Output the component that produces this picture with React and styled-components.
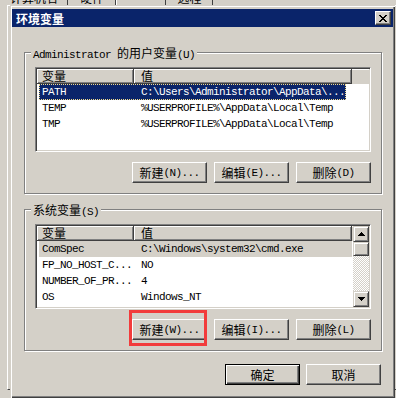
import React from 'react';
import styled, { createGlobalStyle } from 'styled-components';

const FACE = '#d4d0c8';
const NAVY = '#0a246a';

const userVars = [
  { name: 'PATH', value: 'C:\\Users\\Administrator\\AppData\\...', selected: true },
  { name: 'TEMP', value: '%USERPROFILE%\\AppData\\Local\\Temp' },
  { name: 'TMP', value: '%USERPROFILE%\\AppData\\Local\\Temp' },
];

const sysVars = [
  { name: 'ComSpec', value: 'C:\\Windows\\system32\\cmd.exe', inactive: true },
  { name: 'FP_NO_HOST_C...', value: 'NO' },
  { name: 'NUMBER_OF_PR...', value: '4' },
  { name: 'OS', value: 'Windows_NT' },
];

const GlobalStyle = createGlobalStyle`
  html, body {
    margin: 0;
    padding: 0;
    background: ${FACE};
    overflow: hidden;
  }
`;

const Screen = styled.div`
  position: relative;
  width: 396px;
  height: 398px;
  overflow: hidden;
  font-family: "Liberation Mono", "Noto Sans CJK SC", monospace;
  font-size: 11px;
  letter-spacing: -0.6px;
  color: #000;
`;

// CJK run, drawn a bit larger than the latin text (like SimSun)
const C = styled.span`
  font-family: "Noto Sans CJK SC", sans-serif;
  font-size: 12px;
  letter-spacing: 0;
  font-weight: ${(p) => (p.$bold ? 700 : 400)};
`;

/* ---------- window behind the dialog ---------- */

const Tabs = styled.div`
  display: flex;
  height: 5px;
  overflow: hidden;
`;

const Tab = styled.div`
  width: ${(p) => p.$w}px;
  flex: none;
  box-sizing: border-box;
  border-right: 1px solid #404040;
  border-left: 1px solid ${(p) => (p.$active ? '#fff' : 'transparent')};
  text-align: center;

  & > span {
    display: block;
    line-height: 14px;
    margin-top: -9px;
  }
`;

const Panel = styled.div`
  margin-left: 7px;
  height: 383px;
  border-top: 1px solid #fff;
  border-left: 1px solid #fff;
  border-bottom: 1px solid #404040;
`;

/* ---------- dialog ---------- */

const Dialog = styled.div`
  position: absolute;
  left: 10px;
  top: 5px;
  width: 385px;
  height: 393px;
  box-sizing: border-box;
  padding: 4px 2px 2px 2px;
  background: ${FACE};
  box-shadow: inset 1px 1px ${FACE}, inset 2px 2px #fff, inset -1px -1px #404040,
    inset -2px -2px #808080;
`;

const TitleBar = styled.div`
  height: 18px;
  display: flex;
  align-items: center;
  justify-content: space-between;
  padding: 0 2px 0 4px;
  background: ${NAVY};
  color: #fff;
`;

const CloseBtn = styled.div`
  width: 16px;
  height: 14px;
  box-sizing: border-box;
  display: flex;
  align-items: center;
  justify-content: center;
  background: ${FACE};
  border: 1px solid;
  border-color: #fff #404040 #404040 #fff;
  box-shadow: inset -1px -1px #808080;
`;

const Body = styled.div`
  padding: 25px 11px 0 12px;
`;

const Group = styled.div`
  position: relative;
  margin-top: ${(p) => p.$top || 0}px;
  padding: 14px 10px 10px 10px;
  border: 1px solid #808080;
  box-shadow: inset 1px 1px #fff, 1px 1px #fff;
`;

const Legend = styled.div`
  position: absolute;
  top: -7px;
  left: 6px;
  padding: 0 2px;
  line-height: 13px;
  background: ${FACE};
  white-space: nowrap;
`;

const List = styled.div`
  height: 85px;
  box-sizing: border-box;
  display: flex;
  padding: 1px;
  background: #fff;
  border: 1px solid;
  border-color: #808080 #fff #fff #808080;
  box-shadow: inset 1px 1px #404040, inset -1px -1px ${FACE};
`;

const ListContent = styled.div`
  flex: 1;
  min-width: 0;
`;

const Header = styled.div`
  display: flex;
  height: 15px;
  background: ${FACE};
`;

const HeadCell = styled.div`
  width: ${(p) => p.$w}px;
  flex: none;
  box-sizing: border-box;
  padding-left: ${(p) => p.$pad}px;
  line-height: 14px;
  border-right: 1px solid #404040;
  border-bottom: 1px solid #404040;
  box-shadow: inset 1px 1px #fff, inset -1px -1px #808080;
`;

const HeadFill = styled.div`
  flex: 1;
  box-shadow: inset 0 1px #fff;
`;

const Rows = styled.div`
  padding-left: 2px;
`;

const Row = styled.div`
  display: flex;
  width: ${(p) => p.$w}px;
  height: 16px;
  line-height: 16px;
  white-space: nowrap;
  background: ${(p) => (p.$selected ? NAVY : p.$inactive ? FACE : 'transparent')};
  color: ${(p) => (p.$selected ? '#fff' : '#000')};
  outline: ${(p) => (p.$selected ? '1px dotted #f2dc8c' : 'none')};
  outline-offset: -1px;
`;

const Cell = styled.div`
  flex: ${(p) => (p.$w ? 'none' : 1)};
  width: ${(p) => (p.$w ? `${p.$w}px` : 'auto')};
  box-sizing: border-box;
  padding-left: ${(p) => p.$pad}px;
  overflow: hidden;
`;

const ScrollBar = styled.div`
  width: 16px;
  flex: none;
  display: flex;
  flex-direction: column;
`;

const ScrollBtn = styled.div`
  height: ${(p) => p.$h}px;
  flex: none;
  box-sizing: border-box;
  display: flex;
  align-items: center;
  justify-content: center;
  background: ${FACE};
  border: 1px solid;
  border-color: ${FACE} #404040 #404040 ${FACE};
  box-shadow: inset 1px 1px #fff, inset -1px -1px #808080;
`;

const Track = styled.div`
  flex: 1;
  background: repeating-conic-gradient(#fff 0 25%, ${FACE} 0 50%) 0 0 / 2px 2px;
`;

const ButtonRow = styled.div`
  display: flex;
  justify-content: flex-end;
  gap: ${(p) => p.$gap}px;
  margin-top: ${(p) => p.$top}px;
  padding-right: ${(p) => p.$right || 0}px;
`;

const Button = styled.div`
  position: relative;
  width: 75px;
  height: 21px;
  box-sizing: border-box;
  display: flex;
  align-items: center;
  justify-content: center;
  line-height: 16px;
  white-space: nowrap;
  background: ${FACE};
  border: 1px solid;
  border-color: ${(p) => (p.$default ? '#000' : '#fff #404040 #404040 #fff')};
  box-shadow: ${(p) =>
    p.$default
      ? 'inset 1px 1px #fff, inset -1px -1px #404040, inset -2px -2px #808080'
      : 'inset -1px -1px #808080'};

  ${(p) =>
    p.$marked &&
    `
    &::after {
      content: '';
      position: absolute;
      top: -10px;
      left: -4px;
      right: -1px;
      bottom: -7px;
      border: 3px solid #f23b3b;
    }
  `}
`;

const CloseGlyph = () => (
  <svg width="8" height="7" viewBox="0 0 8 7" shapeRendering="crispEdges">
    <path
      fill="#000"
      d="M0 0h2v1H0zM6 0h2v1H6zM1 1h2v1H1zM5 1h2v1H5zM2 2h4v1H2zM3 3h2v1H3zM2 4h4v1H2zM1 5h2v1H1zM5 5h2v1H5zM0 6h2v1H0zM6 6h2v1H6z"
    />
  </svg>
);

const Arrow = ({ down }) => (
  <svg width="7" height="4" viewBox="0 0 7 4" shapeRendering="crispEdges">
    <path
      fill="#000"
      d={down ? 'M0 0h7v1H0zM1 1h5v1H1zM2 2h3v1H2zM3 3h1v1H3z' : 'M3 0h1v1H3zM2 1h3v1H2zM1 2h5v1H1zM0 3h7v1H0z'}
    />
  </svg>
);

const VarList = ({ rows, rowWidth, scroll }) => (
  <List>
    <ListContent>
      <Header>
        <HeadCell $w={97} $pad={5}>
          <C>变量</C>
        </HeadCell>
        <HeadCell $w={218} $pad={7}>
          <C>值</C>
        </HeadCell>
        <HeadFill />
      </Header>
      <Rows>
        {rows.map((r) => (
          <Row key={r.name} $w={rowWidth} $selected={r.selected} $inactive={r.inactive}>
            <Cell $w={95} $pad={3}>
              {r.name}
            </Cell>
            <Cell $pad={7}>{r.value}</Cell>
          </Row>
        ))}
      </Rows>
    </ListContent>
    {scroll && (
      <ScrollBar>
        <ScrollBtn $h={16}>
          <Arrow />
        </ScrollBtn>
        <ScrollBtn $h={14} />
        <Track />
        <ScrollBtn $h={16}>
          <Arrow down />
        </ScrollBtn>
      </ScrollBar>
    )}
  </List>
);

const Actions = ({ keys, marked }) => (
  <ButtonRow $gap={7} $top={10}>
    <Button $marked={marked}>
      <C>新建</C>({keys[0]})...
    </Button>
    <Button>
      <C>编辑</C>({keys[1]})...
    </Button>
    <Button>
      <C>删除</C>({keys[2]})
    </Button>
  </ButtonRow>
);

export default function App() {
  return (
    <Screen>
      <GlobalStyle />
      <Tabs>
        <Tab $w={68}>
          <C>计算机名</C>
        </Tab>
        <Tab $w={48}>
          <C>硬件</C>
        </Tab>
        <Tab $w={50} $active>
          <C> </C>
        </Tab>
        <Tab $w={47}>
          <C>远程</C>
        </Tab>
      </Tabs>
      <Panel />

      <Dialog>
        <TitleBar>
          <C $bold>环境变量</C>
          <CloseBtn>
            <CloseGlyph />
          </CloseBtn>
        </TitleBar>

        <Body>
          <Group>
            <Legend>
              Administrator <C>的用户变量</C>(U)
            </Legend>
            <VarList rows={userVars} rowWidth={307} />
            <Actions keys={['N', 'E', 'D']} />
          </Group>

          <Group $top={15}>
            <Legend>
              <C>系统变量</C>(S)
            </Legend>
            <VarList rows={sysVars} rowWidth={313} scroll />
            <Actions keys={['W', 'I', 'L']} marked />
          </Group>

          <ButtonRow $gap={6} $top={13} $right={1}>
            <Button $default>
              <C>确定</C>
            </Button>
            <Button>
              <C>取消</C>
            </Button>
          </ButtonRow>
        </Body>
      </Dialog>
    </Screen>
  );
}
